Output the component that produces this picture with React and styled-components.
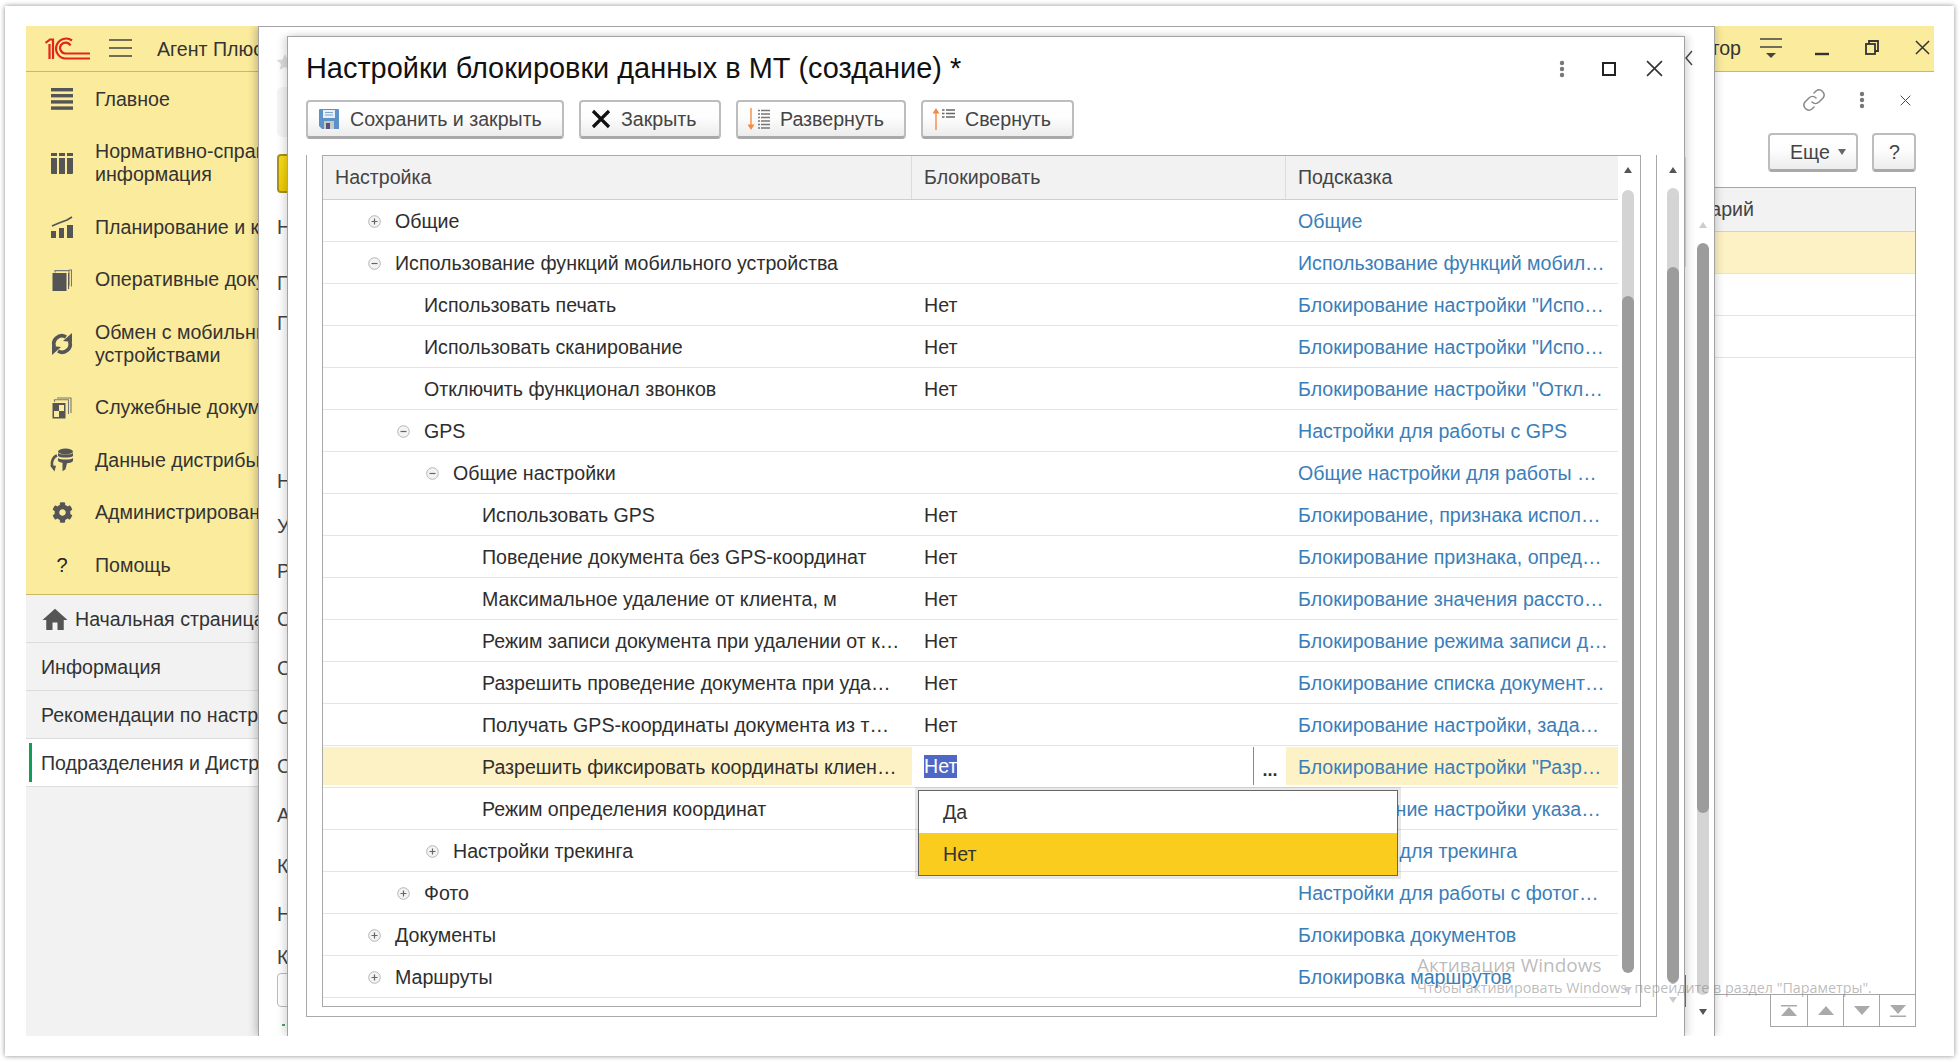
import React from 'react';
import styled, { createGlobalStyle } from 'styled-components';
import { FaCog } from 'react-icons/fa';
import { MdHome } from 'react-icons/md';

const Global = createGlobalStyle`
  html, body { margin: 0; padding: 0; width: 1960px; height: 1062px; background: #fff; overflow: hidden; }
  body { font-family: "Liberation Sans", Arial, sans-serif; font-size: 19.6px; color: #333; }
  * { box-sizing: border-box; }
`;

const Page = styled.div`
  position: relative;
  width: 1960px;
  height: 1062px;
  padding: 6px 6px 6px 5px;
  display: flex;
`;
const Frame = styled.div`
  flex: 1;
  display: flex;
  background: #fff;
  padding: 20px 20px 20px 21px;
  box-shadow: 0 0 5px rgba(0, 0, 0, 0.45);
`;
const App = styled.div`
  position: relative;
  flex: 1;
  display: flex;
  flex-direction: column;
  overflow: hidden;
`;
const TopBar = styled.header`
  height: 46px;
  flex: none;
  display: flex;
  align-items: center;
  background: #fbeb9d;
  border-bottom: 1px solid #c8b968;
  padding: 0 0 2px 19px;
`;
const Logo = styled.svg`
  width: 45px;
  height: 24px;
  margin-right: 19px;
`;
const TopTitle = styled.span`
  margin-left: 25px;
  padding-top: 3px;
  color: #333;
`;
const TopRight = styled.div`
  margin-left: auto;
  display: flex;
  align-items: center;
`;
const TopUser = styled.span`
  padding-top: 2px;
`;
const Body = styled.div`
  flex: 1;
  display: flex;
  min-height: 0;
`;
const Sidebar = styled.aside`
  width: 233px;
  flex: none;
  display: flex;
  flex-direction: column;
  background: #f2f2f2;
  overflow: hidden;
`;
const SideTop = styled.nav`
  height: 523px;
  flex: none;
  padding-top: 1px;
  background: #fbeb9d;
  border-bottom: 1px solid #c8b968;
`;
const SideItem = styled.div`
  display: flex;
  align-items: center;
  padding: 14.75px 0;
  white-space: nowrap;
`;
const SideIcon = styled.span`
  width: 24px;
  height: 22px;
  margin: 0 21px 0 24px;
  flex: none;
  display: flex;
  align-items: center;
  justify-content: center;
  color: #555;
`;
const SideText = styled.span`
  line-height: 23px;
  color: #333;
`;
const Question = styled.span`
  color: #222;
  font-size: 20px;
`;
const NavRow = styled.div`
  height: 48px;
  flex: none;
  display: flex;
  align-items: center;
  gap: 5px;
  padding: 2px 0 0 ${p => (p.$home ? '14px' : '15px')};
  border-bottom: 1px solid #dcdcdc;
  white-space: nowrap;
  background: ${p => (p.$active ? '#fff' : 'transparent')};
  position: relative;
  color: #333;
`;
const HomeIcon = styled(MdHome)`
  flex: none;
  color: #555;
`;
const ActiveMark = styled.i`
  position: absolute;
  left: 3px;
  top: 4px;
  bottom: 4px;
  width: 3px;
  background: #0f9d58;
`;
const Main = styled.main`
  flex: 1;
  display: flex;
  flex-direction: column;
  background: #fff;
  padding: 0 18px 9px 18px;
  min-width: 0;
`;
const TabHead = styled.div`
  height: 56px;
  flex: none;
  display: flex;
  align-items: center;
  justify-content: flex-end;
`;
const ToolRow = styled.div`
  height: 59px;
  flex: none;
  display: flex;
  justify-content: flex-end;
  align-items: flex-start;
  gap: 14px;
  padding-top: 5px;
`;
const Btn = styled.div`
  height: 39px;
  flex: none;
  display: inline-flex;
  align-items: center;
  gap: ${p => p.$gap || 9}px;
  padding: ${p => p.$pad || '0 8px 0 10px'};
  ${p => (p.$w ? `width: ${p.$w}px;` : '')}
  border: 2px solid #bdbdbd;
  border-bottom: 3px solid #a9a9a9;
  border-radius: 4px;
  background: linear-gradient(#fff 0%, #fdfdfd 45%, #ececec 100%);
  color: #444;
  white-space: nowrap;
`;
const Grid = styled.div`
  flex: 1;
  display: flex;
  flex-direction: column;
  border: 1px solid #a6a6a6;
  min-height: 0;
`;
const UnderHead = styled.div`
  height: 44px;
  flex: none;
  display: flex;
  align-items: center;
  justify-content: flex-end;
  padding-right: 161px;
  background: #f2f2f2;
  border-bottom: 1px solid #d2d2d2;
  color: #444;
`;
const UnderRow = styled.div`
  height: 42px;
  flex: none;
  background: ${p => (p.$sel ? '#fdf2c5' : '#fff')};
  border-bottom: 1px solid #e4e4e4;
`;
const Pager = styled.div`
  flex: none;
  align-self: flex-end;
  display: flex;
  border: 1px solid #a6a6a6;
  border-top: 0;
`;
const PagerCell = styled.div`
  width: 36px;
  height: 31px;
  display: flex;
  align-items: center;
  justify-content: center;
  border-left: 1px solid #a6a6a6;
  &:first-child { border-left: 0; }
`;

/* covering window, a form that was opened over the page */
const Layer = styled.section`
  position: absolute;
  left: 232px;
  top: 0;
  width: 1457px;
  bottom: 0;
  display: flex;
  justify-content: space-between;
  background: #fff;
  border: 1px solid #a3a3a3;
  border-bottom: 0;
  box-shadow: -3px 0 8px rgba(0, 0, 0, 0.18), 3px 0 8px rgba(0, 0, 0, 0.1);
  padding-right: 5px;
`;
const LayerCol = styled.div`
  padding-left: 18px;
  width: 200px;
  overflow: hidden;
  display: flex;
  flex-direction: column;
  align-items: flex-start;
`;
const Letter = styled.div`
  height: 24px;
  line-height: 24px;
  margin-top: ${p => p.$mt}px;
  color: #444;
  white-space: nowrap;
`;
const Star = styled.svg`
  width: 18px;
  height: 16px;
  margin: 27px 0 0 -1px;
  flex: none;
`;
const GhostBox = styled.div`
  width: 60px;
  height: 50px;
  margin-top: 17px;
  background: #f5f5f5;
  border-radius: 5px;
  flex: none;
`;
const YellowBtn = styled.div`
  width: 60px;
  height: 39px;
  margin-top: 17px;
  background: linear-gradient(#f9dc1c, #efcb00);
  border: 2px solid #a8931e;
  border-radius: 4px;
  flex: none;
`;
const GhostInput = styled.div`
  width: 60px;
  height: 34px;
  margin-top: 4px;
  border: 1px solid #bbb;
  border-radius: 4px;
  flex: none;
`;
const GreenTick = styled.div`
  width: 3px;
  height: 2px;
  margin: 17px 0 0 5px;
  background: #4aa56a;
  flex: none;
`;
const Chevron = styled.svg`
  position: absolute;
  left: 1426px;
  top: 23px;
  width: 8px;
  height: 16px;
`;
const EdgeTick = styled.i`
  position: absolute;
  left: 1426px;
  top: ${p => p.$top}px;
  height: ${p => p.$h}px;
  width: 1px;
  background: ${p => p.$c};
`;
const ScrollCol = styled.div`
  flex: none;
  width: 12px;
  display: flex;
  flex-direction: column;
  margin: ${p => p.$m || 0};
`;
const ArrowBox = styled.div`
  flex: none;
  height: ${p => p.$h}px;
  display: flex;
  justify-content: center;
  align-items: flex-start;
  padding: ${p => p.$pad || 0};
`;
const Tri = styled.i`
  width: 0;
  height: 0;
  border-left: 4px solid transparent;
  border-right: 4px solid transparent;
  ${p => (p.$down ? 'border-top' : 'border-bottom')}: 6px solid ${p => p.$c || '#555'};
`;
const Track = styled.div`
  flex: 1;
  display: flex;
  flex-direction: column;
  background: #d4d4d4;
  border-radius: 6px;
  overflow: hidden;
`;
const Thumb = styled.div`
  flex: 1;
  margin: ${p => p.$top}px 0 ${p => p.$bottom}px;
  background: #9c9c9c;
  border-radius: 6px;
`;

const Dialog = styled.section`
  position: absolute;
  left: 28px;
  top: 9px;
  width: 1398px;
  bottom: 0;
  display: flex;
  flex-direction: column;
  background: #fff;
  border: 1px solid #a3a3a3;
  border-bottom: 0;
  box-shadow: -4px 0 7px rgba(0, 0, 0, 0.12), 4px 0 7px rgba(0, 0, 0, 0.12);
  padding: 0 5px 19px 18px;
`;
const DlgHead = styled.div`
  height: 63px;
  flex: none;
  display: flex;
  align-items: center;
  padding-right: 16px;
`;
const DlgTitle = styled.h1`
  margin: 0;
  font-weight: 400;
  font-size: 28.9px;
  color: #111;
  white-space: nowrap;
`;
const DlgTools = styled.div`
  margin-left: auto;
  display: flex;
  align-items: center;
`;
const Toolbar = styled.div`
  flex: none;
  display: flex;
  gap: 15px;
  height: 55px;
  align-items: flex-start;
`;
const DlgBody = styled.div`
  flex: 1;
  display: flex;
  min-height: 0;
`;
const Group = styled.div`
  flex: 1;
  display: flex;
  border: 1px solid #a9a9a9;
  border-top: 0;
  padding: 0 15px 9px 15px;
  min-width: 0;
`;
const Table = styled.div`
  flex: 1;
  display: flex;
  border: 1px solid #a9a9a9;
  min-width: 0;
`;
const Rows = styled.div`
  width: 1295px;
  flex: none;
  display: flex;
  flex-direction: column;
`;
const HeadRow = styled.div`
  height: 44px;
  flex: none;
  display: grid;
  grid-template-columns: 589px 374px 1fr;
  background: #f2f2f2;
  border-bottom: 1px solid #cfcfcf;
  color: #444;
`;
const HeadCell = styled.div`
  display: flex;
  align-items: center;
  padding-left: 12px;
  border-right: 1px solid #dcdcdc;
  &:last-child { border-right: 0; }
`;
const Row = styled.div`
  height: 42px;
  flex: none;
  display: grid;
  grid-template-columns: 589px 374px 1fr;
  border-bottom: 1px solid #e4e4e4;
  padding: ${p => (p.$active ? '1px 0 2px' : '0')};
`;
const NameCell = styled.div`
  display: flex;
  align-items: center;
  padding: 2px 0 0 ${p => 45 + p.$level * 29}px;
  background: ${p => (p.$active ? '#fdf2c5' : 'transparent')};
  white-space: nowrap;
  color: #2e2e2e;
`;
const Toggle = styled.span`
  width: 27px;
  flex: none;
  display: flex;
  align-items: center;
`;
const ValueCell = styled.div`
  display: flex;
  align-items: center;
  padding: 2px 0 0 12px;
  color: #2e2e2e;
`;
const EditCell = styled.div`
  display: flex;
  align-items: center;
  padding-left: 12px;
  background: #fff;
`;
const Selected = styled.span`
  background: #4f68c6;
  color: #fff;
  line-height: 23px;
`;
const PickBtn = styled.span`
  margin-left: auto;
  width: 33px;
  height: 100%;
  border-left: 1px solid #888;
  display: flex;
  align-items: flex-end;
  justify-content: center;
  padding-bottom: 10px;
  color: #333;
  font-size: 18px;
  line-height: 10px;
  font-weight: 700;
`;
const HintCell = styled.div`
  display: flex;
  align-items: center;
  padding: 2px 0 0 12px;
  white-space: nowrap;
  color: #3a7eb9;
  background: ${p => (p.$active ? '#fdf2c5' : 'transparent')};
`;
const Popup = styled.div`
  position: absolute;
  left: 892px;
  top: 764px;
  width: 480px;
  border: 1px solid #666;
  background: #fff;
  box-shadow: 0 0 0 3px rgba(0, 0, 0, 0.09);
  z-index: 3;
`;
const PopItem = styled.div`
  height: 42px;
  display: flex;
  align-items: center;
  padding-left: 24px;
  background: ${p => (p.$sel ? '#facc1e' : '#fff')};
  color: #333;
`;
const Watermark = styled.div`
  position: absolute;
  left: 1417px;
  top: 953px;
  font-family: "Open Sans", sans-serif;
  color: rgba(130, 130, 130, 0.55);
  pointer-events: none;
  z-index: 5;
  white-space: nowrap;
`;
const WmTitle = styled.div`
  font-size: 19px;
  line-height: 24px;
`;
const WmText = styled.div`
  font-size: 14.3px;
  line-height: 21px;
`;
const Spacer = styled.span`
  display: inline-block;
  width: ${p => p.$w}px;
  flex: none;
`;

const Dots = ({ c = '#777' }) => (
  <svg width="6" height="18" viewBox="0 0 6 18"><circle cx="3" cy="3" r="2.2" fill={c} /><circle cx="3" cy="9" r="2.2" fill={c} /><circle cx="3" cy="15" r="2.2" fill={c} /></svg>
);
const Cross = ({ s = 16, w = 1.6, c = '#333' }) => (
  <svg width={s} height={s} viewBox="0 0 16 16"><path d="M1 1 15 15M15 1 1 15" stroke={c} strokeWidth={w} fill="none" /></svg>
);
const TreeIcon = ({ open }) => (
  <svg width="13" height="13" viewBox="0 0 13 13">
    <circle cx="6.5" cy="6.5" r="5.8" fill="#f3f3f3" stroke="#b5b5b5" />
    <path d={open ? 'M3.5 6.5h6' : 'M3.5 6.5h6M6.5 3.5v6'} stroke="#666" strokeWidth="1.2" />
  </svg>
);

const icons = {
  main: (
    <svg width="22" height="22" viewBox="0 0 22 22" fill="#555"><rect y="0" width="22" height="3.4" /><rect y="6" width="22" height="3.4" /><rect y="12.2" width="22" height="3.4" /><rect y="18.4" width="22" height="3.4" /></svg>
  ),
  ref: (
    <svg width="22" height="22" viewBox="0 0 22 22" fill="#555"><path d="M0 1h6v3H0zM8 1h6v3H8zM16 1h6v3h-6zM0 6h6v16H1a1 1 0 0 1-1-1zM8 6h6v16H8zM16 6h6v15a1 1 0 0 1-1 1h-5z" /></svg>
  ),
  plan: (
    <svg width="22" height="22" viewBox="0 0 22 22" fill="#555"><path d="M0 15h5v7H0zM8 12h5v10H8zM16 9h6v13h-6z" /><path d="M1 10l7-3 8-3 5-3" stroke="#555" strokeWidth="1.8" fill="none" /></svg>
  ),
  docs: (
    <svg width="20" height="22" viewBox="0 0 20 22" fill="none"><rect x="0.5" y="4" width="14" height="18" fill="#555" /><path d="M3 3.5V1.6h14V17M17 1h2.5v16.5" stroke="#777" strokeWidth="1.1" /><path d="M16.6 4v16" stroke="#555" strokeWidth="1" /></svg>
  ),
  sync: (
    <svg width="22" height="24" viewBox="0 0 22 24" fill="none" stroke="#555" strokeWidth="3.6"><path d="M3.5 15A8 8 0 0 1 15 5" /><path d="M18.5 9A8 8 0 0 1 7 19" /><path d="M21 1 21 10 12 9zM1 23 1 14 10 15z" fill="#555" stroke="none" /></svg>
  ),
  svc: (
    <svg width="20" height="22" viewBox="0 0 20 22" fill="none"><rect x="0.5" y="6" width="13" height="15.5" fill="#555" /><rect x="7" y="8" width="5" height="6" fill="#fbeb9d" /><rect x="2" y="14" width="5" height="6" fill="#fbeb9d" /><path d="M2.5 5V2.8h14V17M5 1h14v15" stroke="#777" strokeWidth="1.1" /></svg>
  ),
  data: (
    <svg width="24" height="24" viewBox="0 0 24 24" fill="#555"><ellipse cx="15.5" cy="3.5" rx="7.5" ry="3" /><path d="M8 5c2 2 13 2 15 0v3c-2 2-13 2-15 0zM8 10c2 2 13 2 15 0v3c-1 1.5-4 2.2-6 2.2l-1.5 6-3 2v-8.500c-2-.3-4-1-4.500-2z" /><path d="M7 7.5C2.5 9 1 15 2.5 18.5" stroke="#555" strokeWidth="2.6" fill="none" /><path d="M0 17.5l6 .3-1.500 5.700z" /></svg>
  ),
};

const rows = [
  { l: 0, t: 'Общие', tree: 'plus', h: 'Общие' },
  { l: 0, t: 'Использование функций мобильного устройства', tree: 'minus', h: 'Использование функций мобил…' },
  { l: 1, t: 'Использовать печать', v: 'Нет', h: 'Блокирование настройки "Испо…' },
  { l: 1, t: 'Использовать сканирование', v: 'Нет', h: 'Блокирование настройки "Испо…' },
  { l: 1, t: 'Отключить функционал звонков', v: 'Нет', h: 'Блокирование настройки "Откл…' },
  { l: 1, t: 'GPS', tree: 'minus', h: 'Настройки для работы с GPS' },
  { l: 2, t: 'Общие настройки', tree: 'minus', h: 'Общие настройки для работы …' },
  { l: 3, t: 'Использовать GPS', v: 'Нет', h: 'Блокирование, признака испол…' },
  { l: 3, t: 'Поведение документа без GPS-координат', v: 'Нет', h: 'Блокирование признака, опред…' },
  { l: 3, t: 'Максимальное удаление от клиента, м', v: 'Нет', h: 'Блокирование значения рассто…' },
  { l: 3, t: 'Режим записи документа при удалении от к…', v: 'Нет', h: 'Блокирование режима записи д…' },
  { l: 3, t: 'Разрешить проведение документа при уда…', v: 'Нет', h: 'Блокирование списка документ…' },
  { l: 3, t: 'Получать GPS-координаты документа из т…', v: 'Нет', h: 'Блокирование настройки, зада…' },
  { l: 3, t: 'Разрешить фиксировать координаты клиен…', active: true, h: 'Блокирование настройки "Разр…' },
  { l: 3, t: 'Режим определения координат', v: 'Нет', h: 'Блокирование настройки указа…' },
  { l: 2, t: 'Настройки трекинга', tree: 'plus', h: 'Настройки для трекинга' },
  { l: 1, t: 'Фото', tree: 'plus', h: 'Настройки для работы с фотог…' },
  { l: 0, t: 'Документы', tree: 'plus', h: 'Блокировка документов' },
  { l: 0, t: 'Маршруты', tree: 'plus', h: 'Блокировка маршрутов' },
];

const letters = [
  ['Н', 22], ['П', 32], ['Г', 16], ['Н', 134], ['У', 21], ['Р', 21], ['С', 24],
  ['С', 25], ['С', 25], ['С', 25], ['А', 25], ['К', 27], ['Н', 24], ['К', 19],
];

const Scroll = ({ m, topH, botH, upC, downC, top, bottom, upPad, downPad }) => (
  <ScrollCol $m={m}>
    <ArrowBox $h={topH} $pad={upPad}><Tri $c={upC} /></ArrowBox>
    <Track><Thumb $top={top} $bottom={bottom} /></Track>
    <ArrowBox $h={botH} $pad={downPad}><Tri $down $c={downC} /></ArrowBox>
  </ScrollCol>
);

export default function AppRoot() {
  return (
    <Page>
      <Global />
      <Frame>
        <App>
          <TopBar>
            <Logo viewBox="0 0 45 24" fill="none" stroke="#e1251b" strokeWidth="2.2">
              <path d="M0.5 7 5 3.5h3V23M4.5 23V8" />
              <path d="M27 4.5A10 10 0 1 0 20 22.5H45" />
              <path d="M25.5 9.5A5.5 5.5 0 1 0 20 17.5H45" />
            </Logo>
            <svg width="23" height="18" viewBox="0 0 23 18" stroke="#444" strokeWidth="1.5"><path d="M0 1h23M0 9h23M0 17h23" /></svg>
            <TopTitle>Агент Плюс</TopTitle>
            <TopRight>
              <TopUser>Администратор</TopUser>
              <Spacer $w={19} />
              <svg width="22" height="22" viewBox="0 0 22 22"><path d="M0 2h22M0 10h22" stroke="#444" strokeWidth="1.5" /><path d="M6 16h10l-5 5z" fill="#444" /></svg>
              <Spacer $w={33} />
              <svg width="14" height="16" viewBox="0 0 14 16"><path d="M0 14h14" stroke="#333" strokeWidth="2.4" /></svg>
              <Spacer $w={36} />
              <svg width="14" height="15" viewBox="0 0 14 15" fill="none" stroke="#333" strokeWidth="1.8"><rect x="1" y="4" width="9" height="10" /><path d="M4 4V1h9v10h-3" /></svg>
              <Spacer $w={36} />
              <Cross s={15} />
              <Spacer $w={4} />
            </TopRight>
          </TopBar>
          <Body>
            <Sidebar>
              <SideTop>
                <SideItem><SideIcon>{icons.main}</SideIcon><SideText>Главное</SideText></SideItem>
                <SideItem><SideIcon>{icons.ref}</SideIcon><SideText>Нормативно-справочная<br />информация</SideText></SideItem>
                <SideItem><SideIcon>{icons.plan}</SideIcon><SideText>Планирование и контроль</SideText></SideItem>
                <SideItem><SideIcon>{icons.docs}</SideIcon><SideText>Оперативные документы</SideText></SideItem>
                <SideItem><SideIcon>{icons.sync}</SideIcon><SideText>Обмен с мобильными<br />устройствами</SideText></SideItem>
                <SideItem><SideIcon>{icons.svc}</SideIcon><SideText>Служебные документы</SideText></SideItem>
                <SideItem><SideIcon>{icons.data}</SideIcon><SideText>Данные дистрибьюторов</SideText></SideItem>
                <SideItem><SideIcon><FaCog size={21} color="#555" /></SideIcon><SideText>Администрирование</SideText></SideItem>
                <SideItem><SideIcon><Question>?</Question></SideIcon><SideText>Помощь</SideText></SideItem>
              </SideTop>
              <NavRow $home><HomeIcon size={30} /><span>Начальная страница</span></NavRow>
              <NavRow>Информация</NavRow>
              <NavRow>Рекомендации по настройке</NavRow>
              <NavRow $active><ActiveMark />Подразделения и Дистрибьюторы</NavRow>
            </Sidebar>
            <Main>
              <TabHead>
                <svg width="24" height="24" viewBox="0 0 24 24" fill="none" stroke="#888" strokeWidth="1.5" strokeLinecap="round"><path d="M10 14a5 5 0 0 0 7 0l4-4a5 5 0 0 0-7-7l-2 2" /><path d="M14 10a5 5 0 0 0-7 0l-4 4a5 5 0 0 0 7 7l2-2" /></svg>
                <Spacer $w={33} />
                <Dots />
                <Spacer $w={35} />
                <Cross s={11} w={1.4} c="#444" />
                <Spacer $w={5} />
              </TabHead>
              <ToolRow>
                <Btn $w={90} $pad="0 0 0 20px" $gap={8}>Еще <Tri $down $c="#666" /></Btn>
                <Btn $w={44} $pad="0 0 0 15px">?</Btn>
              </ToolRow>
              <Grid>
                <UnderHead>Комментарий</UnderHead>
                <UnderRow $sel />
                <UnderRow />
                <UnderRow />
              </Grid>
              <Pager>
                <PagerCell><svg width="16" height="12" viewBox="0 0 16 12" fill="#aaa"><path d="M0 0h16v1.5H0zM8 2l8 9H0z" /></svg></PagerCell>
                <PagerCell><svg width="16" height="9" viewBox="0 0 16 9" fill="#aaa"><path d="M8 0l8 9H0z" /></svg></PagerCell>
                <PagerCell><svg width="16" height="9" viewBox="0 0 16 9" fill="#aaa"><path d="M0 0h16L8 9z" /></svg></PagerCell>
                <PagerCell><svg width="16" height="12" viewBox="0 0 16 12" fill="#aaa"><path d="M0 0h16L8 9zM0 10.5h16V12H0z" /></svg></PagerCell>
              </Pager>
            </Main>
          </Body>

          <Layer>
            <LayerCol>
              <Star viewBox="0 0 18 16"><path d="M9 0l2.6 5.5 6 .6-4.500 4 1.300 5.900L9 13l-5.400 3 1.300-5.900-4.500-4 6-.6z" fill="#ddd" /></Star>
              <GhostBox />
              <YellowBtn />
              {letters.map(([t, mt], i) => <Letter key={i} $mt={mt}>{t}</Letter>)}
              <GhostInput />
              <GreenTick />
            </LayerCol>
            <Scroll m="183px 0 9px" topH={33} botH={32} upC="#ccc" downC="#555" top={0} bottom={182} upPad="12px 0 0" downPad="14px 0 0" />
            <Chevron viewBox="0 0 8 16"><path d="M7 1 1 8l6 7" stroke="#444" strokeWidth="1.4" fill="none" /></Chevron>
            <EdgeTick $top={130} $h={110} $c="#dcdcdc" />
            <EdgeTick $top={948} $h={32} $c="#777" />

            <Dialog>
              <DlgHead>
                <DlgTitle>Настройки блокировки данных в МТ (создание) *</DlgTitle>
                <DlgTools>
                  <Dots />
                  <Spacer $w={37} />
                  <svg width="14" height="14" viewBox="0 0 14 14"><rect x="1" y="1" width="12" height="12" fill="none" stroke="#222" strokeWidth="2" /></svg>
                  <Spacer $w={30} />
                  <Cross s={17} w={1.5} />
                </DlgTools>
              </DlgHead>
              <Toolbar>
                <Btn $w={258} $pad="0 0 0 11px" $gap={11}>
                  <svg width="20" height="20" viewBox="0 0 20 20"><path d="M0 1a1 1 0 0 1 1-1h18a1 1 0 0 1 1 1v19H3l-3-3z" fill="#5d92c9" /><rect x="4" y="1" width="12" height="8" fill="#e8eff6" /><path d="M6 3.5h8M6 6h8" stroke="#7ea6cf" /><rect x="5" y="12" width="10" height="8" fill="#c9c9c9" /><rect x="7" y="14" width="4" height="6" fill="#557" /></svg>
                  <span>Сохранить и закрыть</span>
                </Btn>
                <Btn $w={142} $pad="0 0 0 10px" $gap={10}>
                  <svg width="20" height="20" viewBox="0 0 20 20"><path d="M2 2 18 18M18 2 2 18" stroke="#111" strokeWidth="3.2" /></svg>
                  <span>Закрыть</span>
                </Btn>
                <Btn $w={170} $pad="0 0 0 8px" $gap={8}>
                  <svg width="26" height="22" viewBox="0 0 26 22"><path d="M5 0v19" stroke="#f58a42" strokeWidth="1.4" /><path d="M1.5 16.5h7L5 22z" fill="#f58a42" /><path d="M12 2.5h2M15 2.5h9M12 6h2M15 6h9M12 9.5h2M15 9.5h9M12 13h2M15 13h9M12 16.5h2M15 16.5h9M12 20h2M15 20h9" stroke="#777" strokeWidth="1.3" /></svg>
                  <span>Развернуть</span>
                </Btn>
                <Btn $w={153} $pad="0 0 0 8px" $gap={8}>
                  <svg width="26" height="22" viewBox="0 0 26 22"><path d="M5 3v19" stroke="#f58a42" strokeWidth="1.4" /><path d="M1.5 5.5h7L5 0z" fill="#f58a42" /><path d="M11 2h2.5M15 2h9M11 5.5h2.5M15 5.5h9M11 9h2.5M15 9h9" stroke="#666" strokeWidth="1.5" /></svg>
                  <span>Свернуть</span>
                </Btn>
              </Toolbar>
              <DlgBody>
                <Group>
                  <Table>
                    <Rows>
                      <HeadRow>
                        <HeadCell>Настройка</HeadCell>
                        <HeadCell>Блокировать</HeadCell>
                        <HeadCell>Подсказка</HeadCell>
                      </HeadRow>
                      {rows.map((r, i) => (
                        <Row key={i} $active={r.active}>
                          <NameCell $level={r.l} $active={r.active}>
                            <Toggle>{r.tree && <TreeIcon open={r.tree === 'minus'} />}</Toggle>
                            {r.t}
                          </NameCell>
                          {r.active ? (
                            <EditCell><Selected>Нет</Selected><PickBtn>...</PickBtn></EditCell>
                          ) : (
                            <ValueCell>{r.v}</ValueCell>
                          )}
                          <HintCell $active={r.active}>{r.h}</HintCell>
                        </Row>
                      ))}
                    </Rows>
                    <Scroll m="0 0 0 4px" topH={34} botH={33} upC="#555" downC="#ccc" top={106} bottom={0} upPad="11px 0 0" downPad="14px 0 0" />
                  </Table>
                </Group>
                <Scroll m="0 0 0 10px" topH={33} botH={34} upC="#555" downC="#ccc" top={79} bottom={0} upPad="12px 0 0" downPad="14px 0 0" />
              </DlgBody>
            </Dialog>
          </Layer>

          <Popup>
            <PopItem>Да</PopItem>
            <PopItem $sel>Нет</PopItem>
          </Popup>
        </App>
      </Frame>
      <Watermark>
        <WmTitle>Активация Windows</WmTitle>
        <WmText>Чтобы активировать Windows, перейдите в раздел "Параметры".</WmText>
      </Watermark>
    </Page>
  );
}
